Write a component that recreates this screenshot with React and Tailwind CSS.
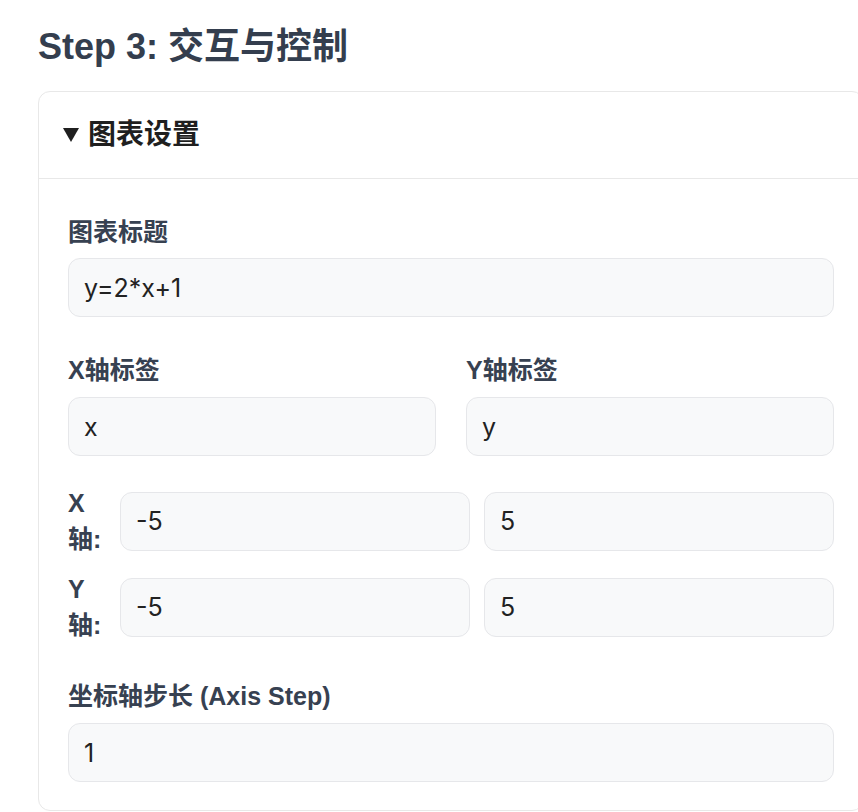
import React from 'react';

const font = { fontFamily: '"Liberation Sans", "Noto Sans CJK SC", sans-serif' };
const inputFont = { fontFamily: 'Inter, "Liberation Sans", "Noto Sans CJK SC", sans-serif' };

const Field = ({ value, className = '' }) => (
  <input
    type="text"
    defaultValue={value}
    readOnly
    style={inputFont}
    className={`h-[59px] w-full min-w-0 rounded-[12px] border border-[#e6e7ea] bg-[#f8f9fa] px-[15px] text-[25px] text-[#222] outline-none ${className}`}
  />
);

const Label = ({ children, className = '' }) => (
  <label className={`block text-[25px] font-semibold leading-[36px] text-[#374151] ${className}`}>{children}</label>
);

const RangeRow = ({ axis, min, max, className = '' }) => (
  <div className={`flex items-center gap-[14px] ${className}`}>
    <span className="w-[38px] shrink-0 text-[25px] font-semibold leading-[36px] text-[#374151]">{axis}轴:</span>
    <Field value={min} className="flex-1" />
    <Field value={max} className="flex-1" />
  </div>
);

export default function App() {
  return (
    <div className="w-full overflow-hidden bg-white" style={font}>
      <div className="pl-[38px] pt-[25px]">
        <h2 className="text-[36px] font-bold leading-[43px] text-[#343e4e]">Step 3: 交互与控制</h2>

        <div className="mt-[23px] w-[826px] rounded-[12px] border border-[#e8e8e8] bg-white">
          <div className="flex h-[87px] items-center border-b border-[#e8e8e8] pl-[24px]">
            <svg width="16" height="16" viewBox="0 0 16 16" className="mr-[9px] shrink-0">
              <polygon points="0,1 16,1 8,15" fill="#1f1f1f" />
            </svg>
            <span className="text-[28px] font-bold text-[#1f1f1f]">图表设置</span>
          </div>

          <div className="px-[29px] pt-[35px] pb-[28px]">
            <Label className="mb-[8px]">图表标题</Label>
            <Field value="y=2*x+1" />

            <div className="mt-[35px] grid grid-cols-2 gap-x-[30px]">
              <div>
                <Label className="mb-[9px]">X轴标签</Label>
                <Field value="x" />
              </div>
              <div>
                <Label className="mb-[9px]">Y轴标签</Label>
                <Field value="y" />
              </div>
            </div>

            <RangeRow axis="X" min="-5" max="5" className="mt-[29px]" />
            <RangeRow axis="Y" min="-5" max="5" className="mt-[14px]" />

            <Label className="mt-[35px] mb-[9px]">坐标轴步长 (Axis Step)</Label>
            <Field value="1" />
          </div>
        </div>
      </div>
    </div>
  );
}
